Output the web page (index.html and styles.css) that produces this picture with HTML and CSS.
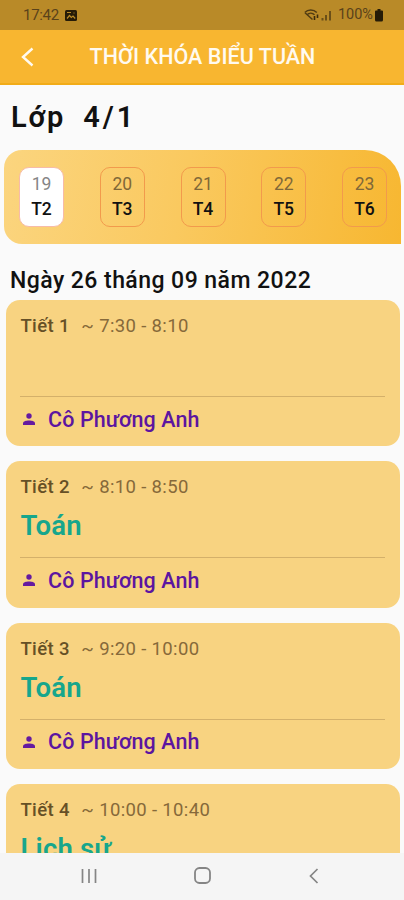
FILE: index.html
```html
<!DOCTYPE html>
<html lang="vi">
<head>
<meta charset="utf-8">
<title>Thời khóa biểu tuần</title>
<link rel="stylesheet" href="styles.css">
</head>
<body>
<div class="status">
  <span class="clock">17:42</span>
  <svg class="pic" width="12" height="11" viewBox="0 0 12 11"><rect width="12" height="11" rx="1.5" fill="#251b07"/><path d="M2 8.500 4.500 5.500 6.300 7.400 8 6l2.200 2.500M2 2.500h4M8.500 3h1" fill="none" stroke="#b98a28" stroke-width="1.200"/></svg>
  <svg class="signal" width="28" height="14" viewBox="0 0 28 14"><path d="M.8 4.500C4 1.200 9.500 1.200 12.800 4.500M3 6.800C5.200 4.700 8.400 4.700 10.500 6.800M1 4.800l7.500 6.700" fill="none" stroke="#503b12" stroke-width="1.500"/><path d="M10.500 8v4M13.500 6.500v3.500" stroke="#3c2b0b" stroke-width="1.600"/><path d="M18.500 10v2.500M22 7v5.500M26 3v9.500" stroke="#6b4f18" stroke-width="2"/></svg>
  <span class="percent">100%</span>
  <svg class="battery" width="8" height="13" viewBox="0 0 8 13"><path d="M2.500 0h3v1.500H7q1 0 1 1V11q0 1.500-1.500 1.500h-5Q0 12.500 0 11V2.500q0-1 1-1h1.500z" fill="#251b07"/></svg>
</div>
<header class="bar">
  <svg class="back" width="14" height="20" viewBox="0 0 14 20"><path d="M11.500 1.500 2 10l9.500 8.500" fill="none" stroke="#fffaf0" stroke-width="2.400"/></svg>
  <h1>THỜI KHÓA BIỂU TUẦN</h1>
</header>
<main>
  <h2 class="class-name"><span>Lớp</span><span class="number">4/1</span></h2>
  <nav class="week">
    <div class="day active"><span>19</span><b>T2</b></div>
    <div class="day"><span>20</span><b>T3</b></div>
    <div class="day"><span>21</span><b>T4</b></div>
    <div class="day"><span>22</span><b>T5</b></div>
    <div class="day"><span>23</span><b>T6</b></div>
  </nav>
  <h3 class="date">Ngày 26 tháng 09 năm 2022</h3>
  <section class="lessons">
    <article class="card">
      <div class="time"><b>Tiết 1</b><span>~ 7:30 - 8:10</span></div>
      <div class="subject"></div>
      <div class="teacher"><svg width="12" height="12" viewBox="0 0 12 12"><circle cx="6" cy="3" r="2.700"/><path d="M0 12V10.600C0 8.400 3 7.600 6 7.600s6 .8 6 3V12z"/></svg><span>Cô Phương Anh</span></div>
    </article>
    <article class="card">
      <div class="time"><b>Tiết 2</b><span>~ 8:10 - 8:50</span></div>
      <div class="subject">Toán</div>
      <div class="teacher"><svg width="12" height="12" viewBox="0 0 12 12"><circle cx="6" cy="3" r="2.700"/><path d="M0 12V10.600C0 8.400 3 7.600 6 7.600s6 .8 6 3V12z"/></svg><span>Cô Phương Anh</span></div>
    </article>
    <article class="card">
      <div class="time"><b>Tiết 3</b><span>~ 9:20 - 10:00</span></div>
      <div class="subject">Toán</div>
      <div class="teacher"><svg width="12" height="12" viewBox="0 0 12 12"><circle cx="6" cy="3" r="2.700"/><path d="M0 12V10.600C0 8.400 3 7.600 6 7.600s6 .8 6 3V12z"/></svg><span>Cô Phương Anh</span></div>
    </article>
    <article class="card">
      <div class="time"><b>Tiết 4</b><span>~ 10:00 - 10:40</span></div>
      <div class="subject">Lịch sử</div>
      <div class="teacher"></div>
    </article>
  </section>
</main>
<footer class="system-nav">
  <svg width="16" height="16" viewBox="0 0 16 16"><path d="M1.500 1v14M8 1v14M14.500 1v14" stroke="#858585" stroke-width="1.700"/></svg>
  <svg width="17" height="17" viewBox="0 0 17 17"><rect x="1" y="1" width="15" height="15" rx="4.500" fill="none" stroke="#858585" stroke-width="1.800"/></svg>
  <svg width="10" height="16" viewBox="0 0 10 16"><path d="M8.500 1 1.500 8l7 7" fill="none" stroke="#858585" stroke-width="1.700"/></svg>
</footer>
</body>
</html>
```
FILE: styles.css
```css
* { box-sizing: border-box; }
body {
  margin: 0;
  width: 404px;
  height: 900px;
  overflow: hidden;
  display: flex;
  flex-direction: column;
  background: #fafafa;
  font-family: Roboto, "Noto Sans", sans-serif;
  color: #111;
}
h1, h2, h3 { margin: 0; font-weight: 500; white-space: nowrap; }
b { font-weight: 500; }
.status {
  flex: none;
  height: 30px;
  display: flex;
  align-items: center;
  padding: 0 21px 0 23px;
  background: #b98a28;
  color: #59421a;
  font-size: 15px;
  line-height: 30px;
}
.clock { width: 42px; letter-spacing: -0.3px; }
.signal { margin-left: auto; }
.percent { margin: 0 2px 0 6px; font-size: 14.500px; letter-spacing: 0; }
.bar {
  flex: none;
  height: 55px;
  display: flex;
  align-items: center;
  padding-left: 21px;
  background: #f8b630;
  border-bottom: 2px solid #f2ac18;
  color: #fffaf0;
}
.bar h1 {
  margin-left: 54.500px;
  font-size: 21.500px;
  line-height: 54px;
  letter-spacing: 0.050px;
}
main {
  flex: none;
  height: 768px;
  overflow: hidden;
}
.class-name {
  display: flex;
  gap: 18px;
  height: 65px;
  padding-left: 11px;
  font-size: 29px;
  font-weight: 600;
  line-height: 64px;
  letter-spacing: 1.800px;
}
.class-name .number { letter-spacing: 3px; }
.week {
  height: 94px;
  margin: 0 3px 0 4px;
  padding: 17px 14px 0 15px;
  display: flex;
  justify-content: space-between;
  border-radius: 18px 36px 0 18px;
  background: linear-gradient(100deg, #fbd57f 0%, #fac95f 45%, #f7b731 100%);
}
.day {
  width: 45px;
  height: 60px;
  padding-top: 5px;
  display: flex;
  flex-direction: column;
  align-items: center;
  border: 1px solid #f29a4c;
  border-radius: 10px;
}
.day.active { background: #fff; border-color: #f7bba8; }
.day span { font-size: 17.500px; line-height: 22px; color: #806838; }
.day.active span { color: #858585; }
.day b { font-size: 17.500px; line-height: 29px; }
.date {
  height: 56.200px;
  padding: 24px 0 0 10px;
  font-size: 23px;
  line-height: 26px;
  letter-spacing: 0.450px;
}
.lessons {
  display: flex;
  flex-direction: column;
  gap: 15px;
  padding: 0 4px 0 6px;
}
.card {
  height: 146.300px;
  flex: none;
  padding: 15px 15px 0 14px;
  border-radius: 14px;
  background: #f8d381;
}
.time {
  display: flex;
  gap: 11.500px;
  height: 22px;
  padding-left: 0.500px;
  font-size: 18.500px;
  line-height: 22px;
  letter-spacing: 0.350px;
  color: #86693a;
}
.time b { color: #665026; }
.subject {
  height: 60px;
  padding: 11px 0 0 0.500px;
  border-bottom: 1px solid #d4b06a;
  color: #17a68c;
  font-size: 27.500px;
  font-weight: 600;
  letter-spacing: 0.200px;
  line-height: 34px;
}
.teacher {
  display: flex;
  align-items: center;
  gap: 13px;
  height: 44px;
  padding-left: 3px;
  color: #5c15a0;
  font-size: 21.500px;
  font-weight: 500;
  letter-spacing: 0.100px;
}
.teacher svg { fill: #651aa0; }
.system-nav {
  flex: none;
  height: 47px;
  display: grid;
  grid-template-columns: 16px 17px 10px;
  column-gap: 97.500px;
  align-items: center;
  padding: 0 0 2px 80.500px;
  background: #f5f5f5;
}
```
